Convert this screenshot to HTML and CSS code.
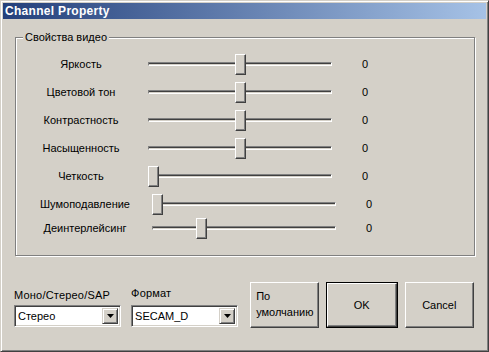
FILE: index.html
```html
<!DOCTYPE html>
<html lang="ru">
<head>
    <meta charset="UTF-8">
    <meta name="viewport" content="width=device-width, initial-scale=1.0">
    <title>Channel Property</title>
    <link rel="stylesheet" href="styles.css">
</head>
<body>
    <div class="window">
        <div class="titlebar">Channel Property</div>
        <div class="content">
            <div class="groupbox">
                <span class="legend">Свойства видео</span>

                <div class="row">
                    <span class="label">Яркость</span>
                    <div class="slider"><div class="track"></div><div class="thumb" style="left:87px"></div></div>
                    <span class="value">0</span>
                </div>
                <div class="row">
                    <span class="label">Цветовой тон</span>
                    <div class="slider"><div class="track"></div><div class="thumb" style="left:87px"></div></div>
                    <span class="value">0</span>
                </div>
                <div class="row">
                    <span class="label">Контрастность</span>
                    <div class="slider"><div class="track"></div><div class="thumb" style="left:87px"></div></div>
                    <span class="value">0</span>
                </div>
                <div class="row">
                    <span class="label">Насыщенность</span>
                    <div class="slider"><div class="track"></div><div class="thumb" style="left:87px"></div></div>
                    <span class="value">0</span>
                </div>
                <div class="row">
                    <span class="label">Четкость</span>
                    <div class="slider"><div class="track"></div><div class="thumb" style="left:0px"></div></div>
                    <span class="value">0</span>
                </div>
                <div class="row row-shift">
                    <span class="label">Шумоподавление</span>
                    <div class="slider"><div class="track"></div><div class="thumb" style="left:0px"></div></div>
                    <span class="value">0</span>
                </div>
                <div class="row row-shift row-last">
                    <span class="label">Деинтерлейсинг</span>
                    <div class="slider"><div class="track"></div><div class="thumb" style="left:44px"></div></div>
                    <span class="value">0</span>
                </div>
            </div>

            <div class="bottom">
                <div class="field">
                    <span class="field-label">Моно/Стерео/SAP</span>
                    <div class="combo">
                        <span class="combo-text">Стерео</span>
                        <span class="combo-btn">
                            <svg width="7" height="4" viewBox="0 0 7 4"><path d="M0 0h7L3.5 4z" fill="#000"/></svg>
                        </span>
                    </div>
                </div>
                <div class="field">
                    <span class="field-label field-label-up">Формат</span>
                    <div class="combo">
                        <span class="combo-text">SECAM_D</span>
                        <span class="combo-btn">
                            <svg width="7" height="4" viewBox="0 0 7 4"><path d="M0 0h7L3.5 4z" fill="#000"/></svg>
                        </span>
                    </div>
                </div>
                <button class="btn btn-defaults">По<br>умолчанию</button>
                <div class="default-frame"><button class="btn btn-ok">OK</button></div>
                <button class="btn btn-cancel">Cancel</button>
            </div>
        </div>
    </div>
</body>
</html>
```

FILE: styles.css
```css
body {
    margin: 0;
    background-color: #d4d0c8;
    font-family: "Liberation Sans", Arial, sans-serif;
    font-size: 11px;
    color: #000;
}
.window {
    width: 489px;
    height: 352px;
    box-sizing: border-box;
    background-color: #d4d0c8;
    border: 1px solid;
    border-color: #d4d0c8 #404040 #404040 #d4d0c8;
    box-shadow: inset 1px 1px 0 #fff, inset -1px -1px 0 #808080;
    padding: 2px;
}
.titlebar {
    height: 16px;
    line-height: 16px;
    padding-left: 2px;
    background: linear-gradient(to right, #24407b, #a6c2e6);
    color: #fff;
    font-weight: bold;
    font-size: 12px;
    letter-spacing: 0.3px;
}
.content {
    padding: 18px 12px 0 12px;
}
.groupbox {
    position: relative;
    width: 460px;
    height: 219px;
    box-sizing: border-box;
    border: 1px solid #808080;
    box-shadow: 1px 1px 0 #fff, inset 1px 1px 0 #fff;
    padding: 12px 0 0 3px;
}
.legend {
    position: absolute;
    top: -8px;
    left: 7px;
    padding: 0 2px;
    background-color: #d4d0c8;
    line-height: 14px;
}
.row {
    display: flex;
    align-items: center;
    height: 28px;
}
.row-shift {
    padding-left: 4px;
}
.row-last {
    margin-top: -4px;
}
.label {
    width: 124px;
    text-align: center;
}
.slider {
    position: relative;
    width: 184px;
    height: 21px;
    margin-left: 5px;
}
.track {
    position: absolute;
    top: 8px;
    left: 0;
    right: 0;
    height: 4px;
    box-sizing: border-box;
    border: 1px solid;
    border-color: #808080 #fff #fff #808080;
    background: linear-gradient(#404040 0 1px, #d4d0c8 1px);
}
.thumb {
    position: absolute;
    top: 0;
    width: 11px;
    height: 21px;
    box-sizing: border-box;
    background-color: #d4d0c8;
    border: 1px solid;
    border-color: #fff #404040 #404040 #fff;
    box-shadow: inset -1px -1px 0 #808080;
}
.value {
    margin-left: 30px;
}
.bottom {
    display: flex;
    align-items: flex-end;
    margin: 26px 0 0 -1px;
}
.field {
    display: flex;
    flex-direction: column;
    width: 108px;
    margin: 0 10px 1px 0;
}
.field + .field {
    margin-right: 12px;
}
.field-label {
    line-height: 13px;
    margin-bottom: 3px;
    letter-spacing: 0.2px;
}
.field-label-up {
    position: relative;
    top: -2px;
}
.combo {
    display: flex;
    align-items: center;
    height: 22px;
    box-sizing: border-box;
    background-color: #fff;
    border: 1px solid;
    border-color: #808080 #fff #fff #808080;
    box-shadow: inset 1px 1px 0 #404040, inset -1px -1px 0 #d4d0c8;
    padding: 2px;
}
.combo-text {
    flex: 1;
    padding-left: 1px;
}
.combo-btn {
    display: flex;
    align-items: center;
    justify-content: center;
    width: 16px;
    height: 16px;
    box-sizing: border-box;
    background-color: #d4d0c8;
    border: 1px solid;
    border-color: #d4d0c8 #404040 #404040 #d4d0c8;
    box-shadow: inset 1px 1px 0 #fff, inset -1px -1px 0 #808080;
}
.btn {
    height: 46px;
    box-sizing: border-box;
    background-color: #d4d0c8;
    border: 1px solid;
    border-color: #fff #404040 #404040 #fff;
    box-shadow: inset -1px -1px 0 #808080;
    font-family: "Liberation Sans", Arial, sans-serif;
    font-size: 11px;
    color: #000;
    padding: 0;
    cursor: pointer;
}
.btn-defaults {
    width: 69px;
    text-align: left;
    padding: 0 0 2px 5px;
    line-height: 16px;
}
.default-frame {
    margin-left: 7px;
    width: 72px;
    height: 46px;
    box-sizing: border-box;
    border: 1px solid #000;
}
.btn-ok {
    width: 70px;
    height: 44px;
}
.btn-cancel {
    width: 70px;
    margin-left: 7px;
}
```
